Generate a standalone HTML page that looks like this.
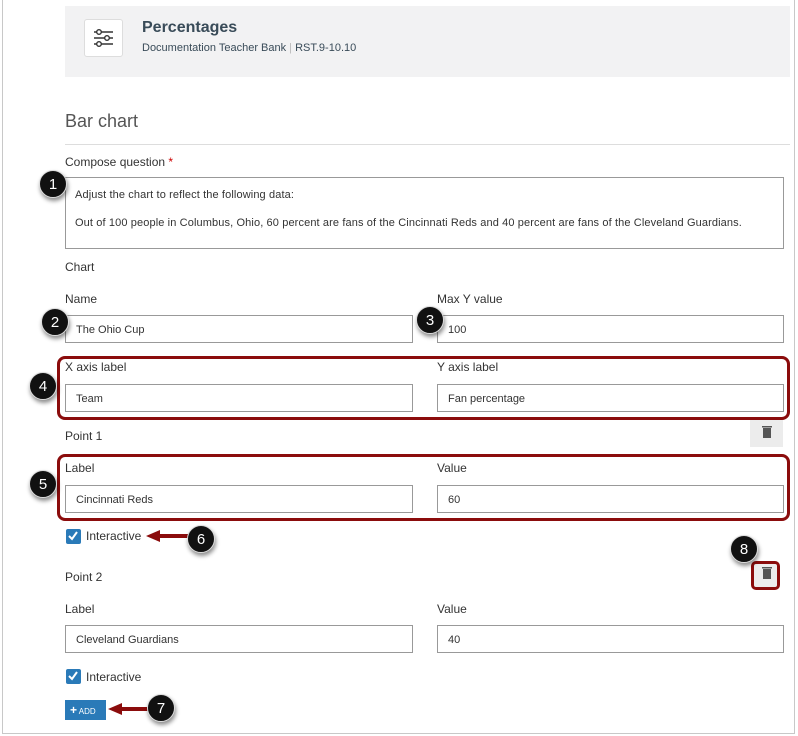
<!DOCTYPE html>
<html><head><meta charset="utf-8"><style>
*{box-sizing:border-box;margin:0;padding:0}
body{width:798px;height:736px;background:#fff;font-family:"Liberation Sans",sans-serif;color:#2d3b45;position:relative;overflow:hidden}
.a{position:absolute}
.frame{left:2px;top:-2px;width:793px;height:736px;border:1px solid #c8c8c8;border-top:none}
.lbl{font-size:12px;color:#333;position:absolute}
.inp{position:absolute;height:28px;border:1px solid #999;font-size:11px;color:#333;padding:0 10px;line-height:28px;background:#fff}
.red{position:absolute;border:3px solid #8b0c0c;border-radius:8px}
.c{position:absolute;width:28px;height:28px;border-radius:50%;background:#111;color:#fff;font-size:15px;text-align:center;line-height:28px;box-shadow:1px 3px 4px rgba(0,0,0,.45);border:1px solid #ddd}
.cb{position:absolute;width:15px;height:15px;background:#2a7ab8;border-radius:2px}
.trash{position:absolute;width:33px;height:27px;background:#ececec}
</style></head><body>
<div class="a frame"></div>
<div class="a" style="left:65px;top:6px;width:725px;height:71px;background:#f2f2f3"></div>
<div class="a" style="left:84px;top:19px;width:39px;height:38px;background:#fff;border:1px solid #ddd;border-radius:3px">
<svg width="37" height="36" viewBox="0 0 37 36"><g stroke="#333" stroke-width="1.4" fill="#fff">
<line x1="9" y1="12" x2="28" y2="12"/><line x1="9" y1="18" x2="28" y2="18"/><line x1="9" y1="24" x2="28" y2="24"/>
<circle cx="14" cy="12" r="2.3"/><circle cx="22" cy="18" r="2.3"/><circle cx="14" cy="24" r="2.3"/></g></svg></div>
<div class="a" style="left:142px;top:19px;font-size:16px;font-weight:bold;color:#394b58">Percentages</div>
<div class="a" style="left:142px;top:42px;font-size:11px;color:#394b58">Documentation Teacher Bank <span style="color:#bbb">|</span> RST.9-10.10</div>
<div class="a" style="left:65px;top:111px;font-size:18px;font-weight:300;color:#555">Bar chart</div>
<div class="a" style="left:65px;top:144px;width:725px;height:1px;background:#ddd"></div>
<div class="lbl" style="left:65px;top:155px">Compose question <span style="color:#c00">*</span></div>
<div class="a" style="left:65px;top:177px;width:719px;height:72px;border:1px solid #999;font-size:11px;letter-spacing:0.12px;color:#333;padding:10px 9px;line-height:14px">Adjust the chart to reflect the following data:<div style="margin-top:14px">Out of 100 people in Columbus, Ohio, 60 percent are fans of the Cincinnati Reds and 40 percent are fans of the Cleveland Guardians.</div></div>
<div class="lbl" style="left:65px;top:260px">Chart</div>
<div class="lbl" style="left:65px;top:292px">Name</div>
<div class="lbl" style="left:437px;top:292px">Max Y value</div>
<div class="inp" style="left:65px;top:315px;width:348px">The Ohio Cup</div>
<div class="inp" style="left:437px;top:315px;width:347px">100</div>
<div class="red" style="left:57px;top:356px;width:733px;height:64px"></div>
<div class="lbl" style="left:65px;top:360px">X axis label</div>
<div class="lbl" style="left:437px;top:360px">Y axis label</div>
<div class="inp" style="left:65px;top:384px;width:348px">Team</div>
<div class="inp" style="left:437px;top:384px;width:347px">Fan percentage</div>
<div class="lbl" style="left:65px;top:429px">Point 1</div>
<div class="trash" style="left:750px;top:420px"></div>
<div class="red" style="left:57px;top:454px;width:733px;height:67px"></div>
<div class="lbl" style="left:65px;top:461px">Label</div>
<div class="lbl" style="left:437px;top:461px">Value</div>
<div class="inp" style="left:65px;top:485px;width:348px">Cincinnati Reds</div>
<div class="inp" style="left:437px;top:485px;width:347px">60</div>
<div class="cb" style="left:66px;top:529px"></div>
<div class="lbl" style="left:86px;top:529px">Interactive</div>
<div class="lbl" style="left:65px;top:570px">Point 2</div>
<div class="trash" style="left:751px;top:561px;width:29px;height:29px;border:3px solid #8b0c0c;border-radius:5px"></div>
<div class="lbl" style="left:65px;top:602px">Label</div>
<div class="lbl" style="left:437px;top:602px">Value</div>
<div class="inp" style="left:65px;top:625px;width:348px">Cleveland Guardians</div>
<div class="inp" style="left:437px;top:625px;width:347px">40</div>
<div class="cb" style="left:66px;top:669px"></div>
<div class="lbl" style="left:86px;top:670px">Interactive</div>
<div class="a" style="left:65px;top:700px;width:41px;height:20px;background:#2a7ab8;color:#fff;font-size:8px;line-height:20px;padding-left:5px"><b style="font-size:12px">+</b> ADD</div>
<svg class="a" style="left:0;top:0" width="798" height="736">
<g fill="none" stroke="#fff" stroke-width="2"><polyline points="69,536 72,539 77,532"/><polyline points="69,676 72,679 77,672"/></g>
<g fill="#555"><rect x="763" y="428" width="8" height="10"/><rect x="762" y="426" width="10" height="1.5"/><rect x="763" y="569" width="8" height="10"/><rect x="762" y="567" width="10" height="1.5"/></g>
<g fill="#8b0c0c"><rect x="158" y="534" width="30" height="4"/><polygon points="146,536 160,530 160,542"/>
<rect x="120" y="707" width="28" height="4"/><polygon points="108,709 122,703 122,715"/></g>
</svg>
<div class="c" style="left:39px;top:170px">1</div>
<div class="c" style="left:41px;top:308px">2</div>
<div class="c" style="left:416px;top:306px">3</div>
<div class="c" style="left:29px;top:372px">4</div>
<div class="c" style="left:29px;top:470px">5</div>
<div class="c" style="left:187px;top:525px">6</div>
<div class="c" style="left:147px;top:694px">7</div>
<div class="c" style="left:730px;top:535px">8</div>
</body></html>
